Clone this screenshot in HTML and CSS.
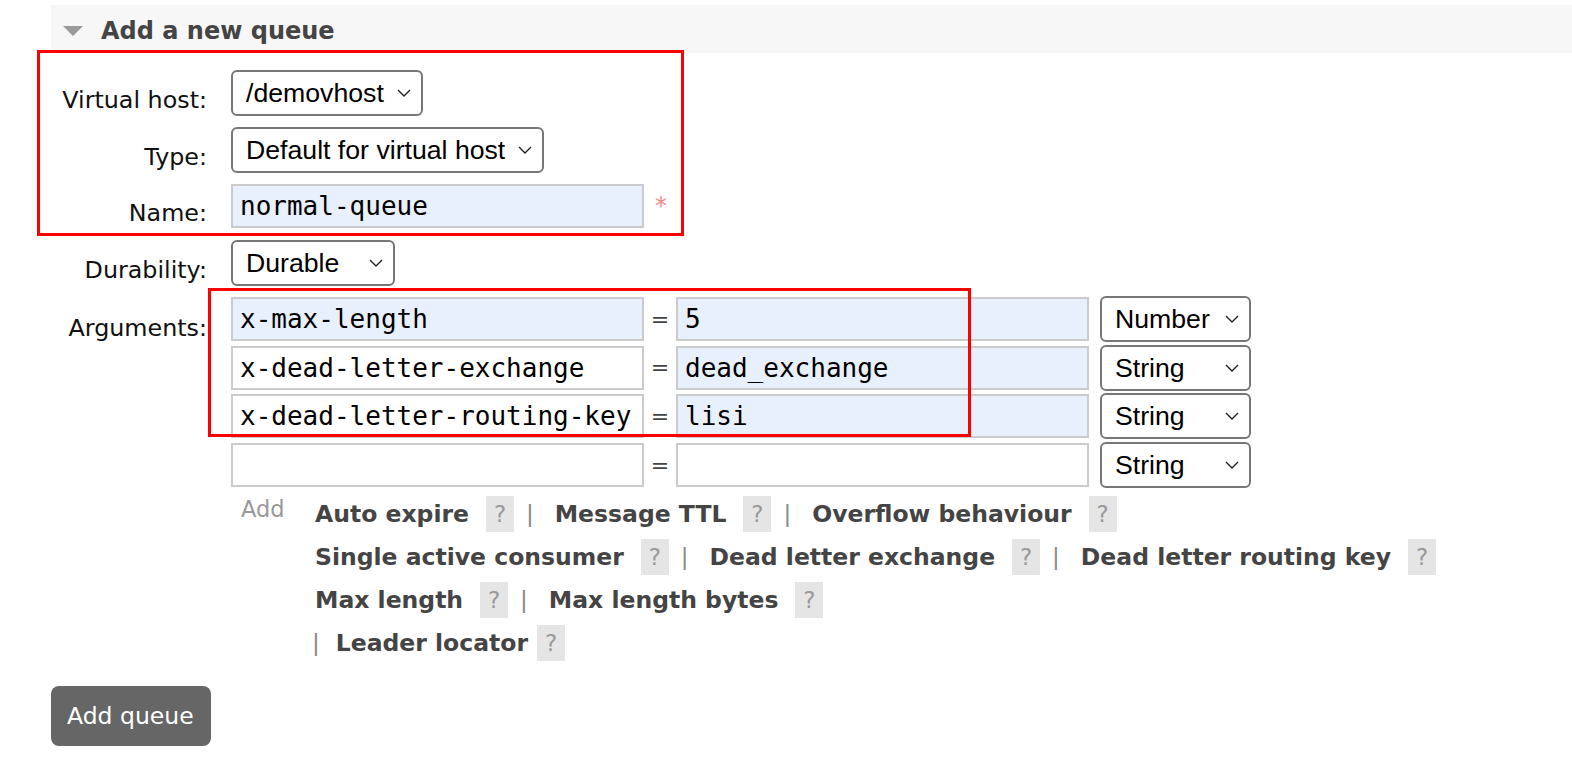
FILE: index.html
```html
<!DOCTYPE html>
<html>
<head>
<meta charset="utf-8">
<title>Add a new queue</title>
<link rel="stylesheet" href="styles.css">
</head>
<body>
<div class="page">
  <div class="section-head">
    <span class="tri"></span>
    <h2 class="title">Add a new queue</h2>
  </div>

  <form class="form">
    <label class="lbl">Virtual host:</label>
    <div class="ctl">
      <select class="sel sel-vhost"><option>/demovhost</option></select>
    </div>

    <label class="lbl">Type:</label>
    <div class="ctl">
      <select class="sel sel-type"><option>Default for virtual host</option></select>
    </div>

    <label class="lbl lbl-name">Name:</label>
    <div class="ctl">
      <input class="txt filled" type="text" value="normal-queue">
      <span class="req">*</span>
    </div>

    <label class="lbl">Durability:</label>
    <div class="ctl">
      <select class="sel sel-dur"><option>Durable</option><option>Transient</option></select>
    </div>

    <label class="lbl lbl-args">Arguments:</label>
    <div class="args-cell">
      <div class="args">
        <div class="arg-row">
          <input class="txt filled" type="text" value="x-max-length">
          <span class="eq">=</span>
          <input class="txt filled" type="text" value="5">
          <select class="sel sel-argtype"><option>Number</option></select>
        </div>
        <div class="arg-row">
          <input class="txt" type="text" value="x-dead-letter-exchange">
          <span class="eq">=</span>
          <input class="txt filled" type="text" value="dead_exchange">
          <select class="sel sel-argtype"><option>String</option></select>
        </div>
        <div class="arg-row">
          <input class="txt" type="text" value="x-dead-letter-routing-key">
          <span class="eq">=</span>
          <input class="txt filled" type="text" value="lisi">
          <select class="sel sel-argtype"><option>String</option></select>
        </div>
        <div class="arg-row">
          <input class="txt" type="text" value="">
          <span class="eq">=</span>
          <input class="txt" type="text" value="">
          <select class="sel sel-argtype"><option>String</option></select>
        </div>
      </div>

      <div class="add-row">
        <span class="add-label">Add</span>
        <div class="add-links">
          <div class="line">
            <span class="alink">Auto expire</span><span class="help">?</span>
            <span class="sep">|</span>
            <span class="alink">Message TTL</span><span class="help">?</span>
            <span class="sep">|</span>
            <span class="alink">Overflow behaviour</span><span class="help">?</span>
          </div>
          <div class="line">
            <span class="alink">Single active consumer</span><span class="help">?</span>
            <span class="sep">|</span>
            <span class="alink">Dead letter exchange</span><span class="help">?</span>
            <span class="sep">|</span>
            <span class="alink">Dead letter routing key</span><span class="help">?</span>
          </div>
          <div class="line">
            <span class="alink">Max length</span><span class="help">?</span>
            <span class="sep">|</span>
            <span class="alink">Max length bytes</span><span class="help">?</span>
          </div>
          <div class="line line-last">
            <span class="sep sep-lead">|</span>
            <span class="alink">Leader locator</span><span class="help help-tight">?</span>
          </div>
        </div>
      </div>
    </div>
  </form>

  <button class="btn" type="button">Add queue</button>

  <div class="mark mark-1"></div>
  <div class="mark mark-2"></div>
</div>
</body>
</html>
```

FILE: styles.css
```css
html, body {
  margin: 0;
  padding: 0;
  background: #fff;
}

.page {
  position: relative;
  padding: 5px 0 0 51px;
  font-family: "DejaVu Sans", Verdana, sans-serif;
  color: #111;
  min-height: 758px;
  box-sizing: border-box;
}

.section-head {
  display: flex;
  align-items: center;
  height: 48px;
  background: #f7f7f7;
  padding-left: 12px;
}

.tri {
  width: 0;
  height: 0;
  border-left: 10.5px solid transparent;
  border-right: 10.5px solid transparent;
  border-top: 10px solid #9a9a9a;
  margin-top: 4px;
}

.title {
  margin: 0 0 0 18px;
  padding-top: 4px;
  font-size: 24px;
  font-weight: bold;
  color: #444;
  line-height: 1;
}

.form {
  display: grid;
  grid-template-columns: 156px auto;
  column-gap: 24px;
  row-gap: 10.5px;
  align-items: start;
  margin-top: 17px;
}

.lbl {
  text-align: right;
  font-size: 23.8px;
  line-height: 27px;
  padding-top: 17px;
  color: #111;
}

.lbl-name {
  padding-top: 17px;
}

.lbl-args {
  padding-top: 19px;
}

.ctl {
  display: flex;
  align-items: center;
  min-height: 46px;
}

.sel {
  appearance: none;
  -webkit-appearance: none;
  box-sizing: border-box;
  height: 46px;
  border: 2px solid #777;
  border-radius: 6px;
  padding: 0 24px 0 13px;
  font-family: "Liberation Sans", Arial, sans-serif;
  font-size: 26.67px;
  color: #000;
  background-color: #fff;
  background-image: url("data:image/svg+xml,%3Csvg xmlns='http://www.w3.org/2000/svg' width='14' height='8' viewBox='0 0 14 8'%3E%3Cpath d='M1 1 L7 7 L13 1' fill='none' stroke='%23222' stroke-width='1.4'/%3E%3C/svg%3E");
  background-repeat: no-repeat;
  background-position: right 10px center;
  background-size: 14px 8px;
}

.sel-vhost { width: 192px; }
.sel-type { width: 313px; }
.sel-dur { width: 164px; }
.sel-argtype { width: 151px; margin-left: 11px; }

.txt {
  box-sizing: border-box;
  width: 413px;
  height: 44px;
  border: 2px solid #cbcbcb;
  border-radius: 0;
  padding: 0 7px;
  margin: 0;
  font-family: "DejaVu Sans Mono", Menlo, monospace;
  font-size: 26px;
  color: #000;
  background: #fff;
  outline: none;
}

.txt.filled {
  background: #e8f0fe;
}

.req {
  margin-left: 11px;
  color: #f78a8a;
  font-size: 24px;
  line-height: 1;
  padding-bottom: 0;
}

.args-cell {
  display: flex;
  flex-direction: column;
}

.args {
  display: flex;
  flex-direction: column;
  gap: 2.7px;
}

.arg-row {
  display: flex;
  align-items: center;
  height: 46px;
}

.eq {
  width: 32px;
  text-align: center;
  font-size: 22px;
  color: #444;
}

.add-row {
  display: flex;
  margin-top: 4px;
}

.add-label {
  box-sizing: border-box;
  width: 84px;
  padding-left: 10px;
  padding-top: 4px;
  font-size: 22.5px;
  line-height: 27px;
  color: #999;
}

.add-links {
  display: flex;
  flex-direction: column;
}

.line {
  display: flex;
  align-items: center;
  height: 43px;
}

.alink {
  font-size: 23.5px;
  font-weight: bold;
  color: #444;
  white-space: nowrap;
}

.help {
  display: inline-flex;
  align-items: center;
  justify-content: center;
  width: 28px;
  height: 36px;
  margin-left: 17px;
  background: #e5e5e5;
  color: #999;
  font-size: 23px;
}

.help-tight {
  margin-left: 9px;
}

.sep {
  margin: 0 21px 0 12px;
  color: #888;
  font-size: 23px;
}

.sep-lead {
  margin: 0 16px 0 -3px;
}

.btn {
  display: block;
  margin-top: 22px;
  box-sizing: border-box;
  width: 160px;
  height: 60px;
  padding: 0 16px;
  border: none;
  border-radius: 8px;
  background: #666;
  color: #fff;
  font-family: "DejaVu Sans", Verdana, sans-serif;
  font-size: 23.5px;
  text-align: left;
}

.mark {
  position: absolute;
  box-sizing: border-box;
  border: 3px solid #f00;
  pointer-events: none;
}

.mark-1 {
  left: 37px;
  top: 50px;
  width: 647px;
  height: 186px;
}

.mark-2 {
  left: 208px;
  top: 288px;
  width: 763px;
  height: 149px;
}
```
